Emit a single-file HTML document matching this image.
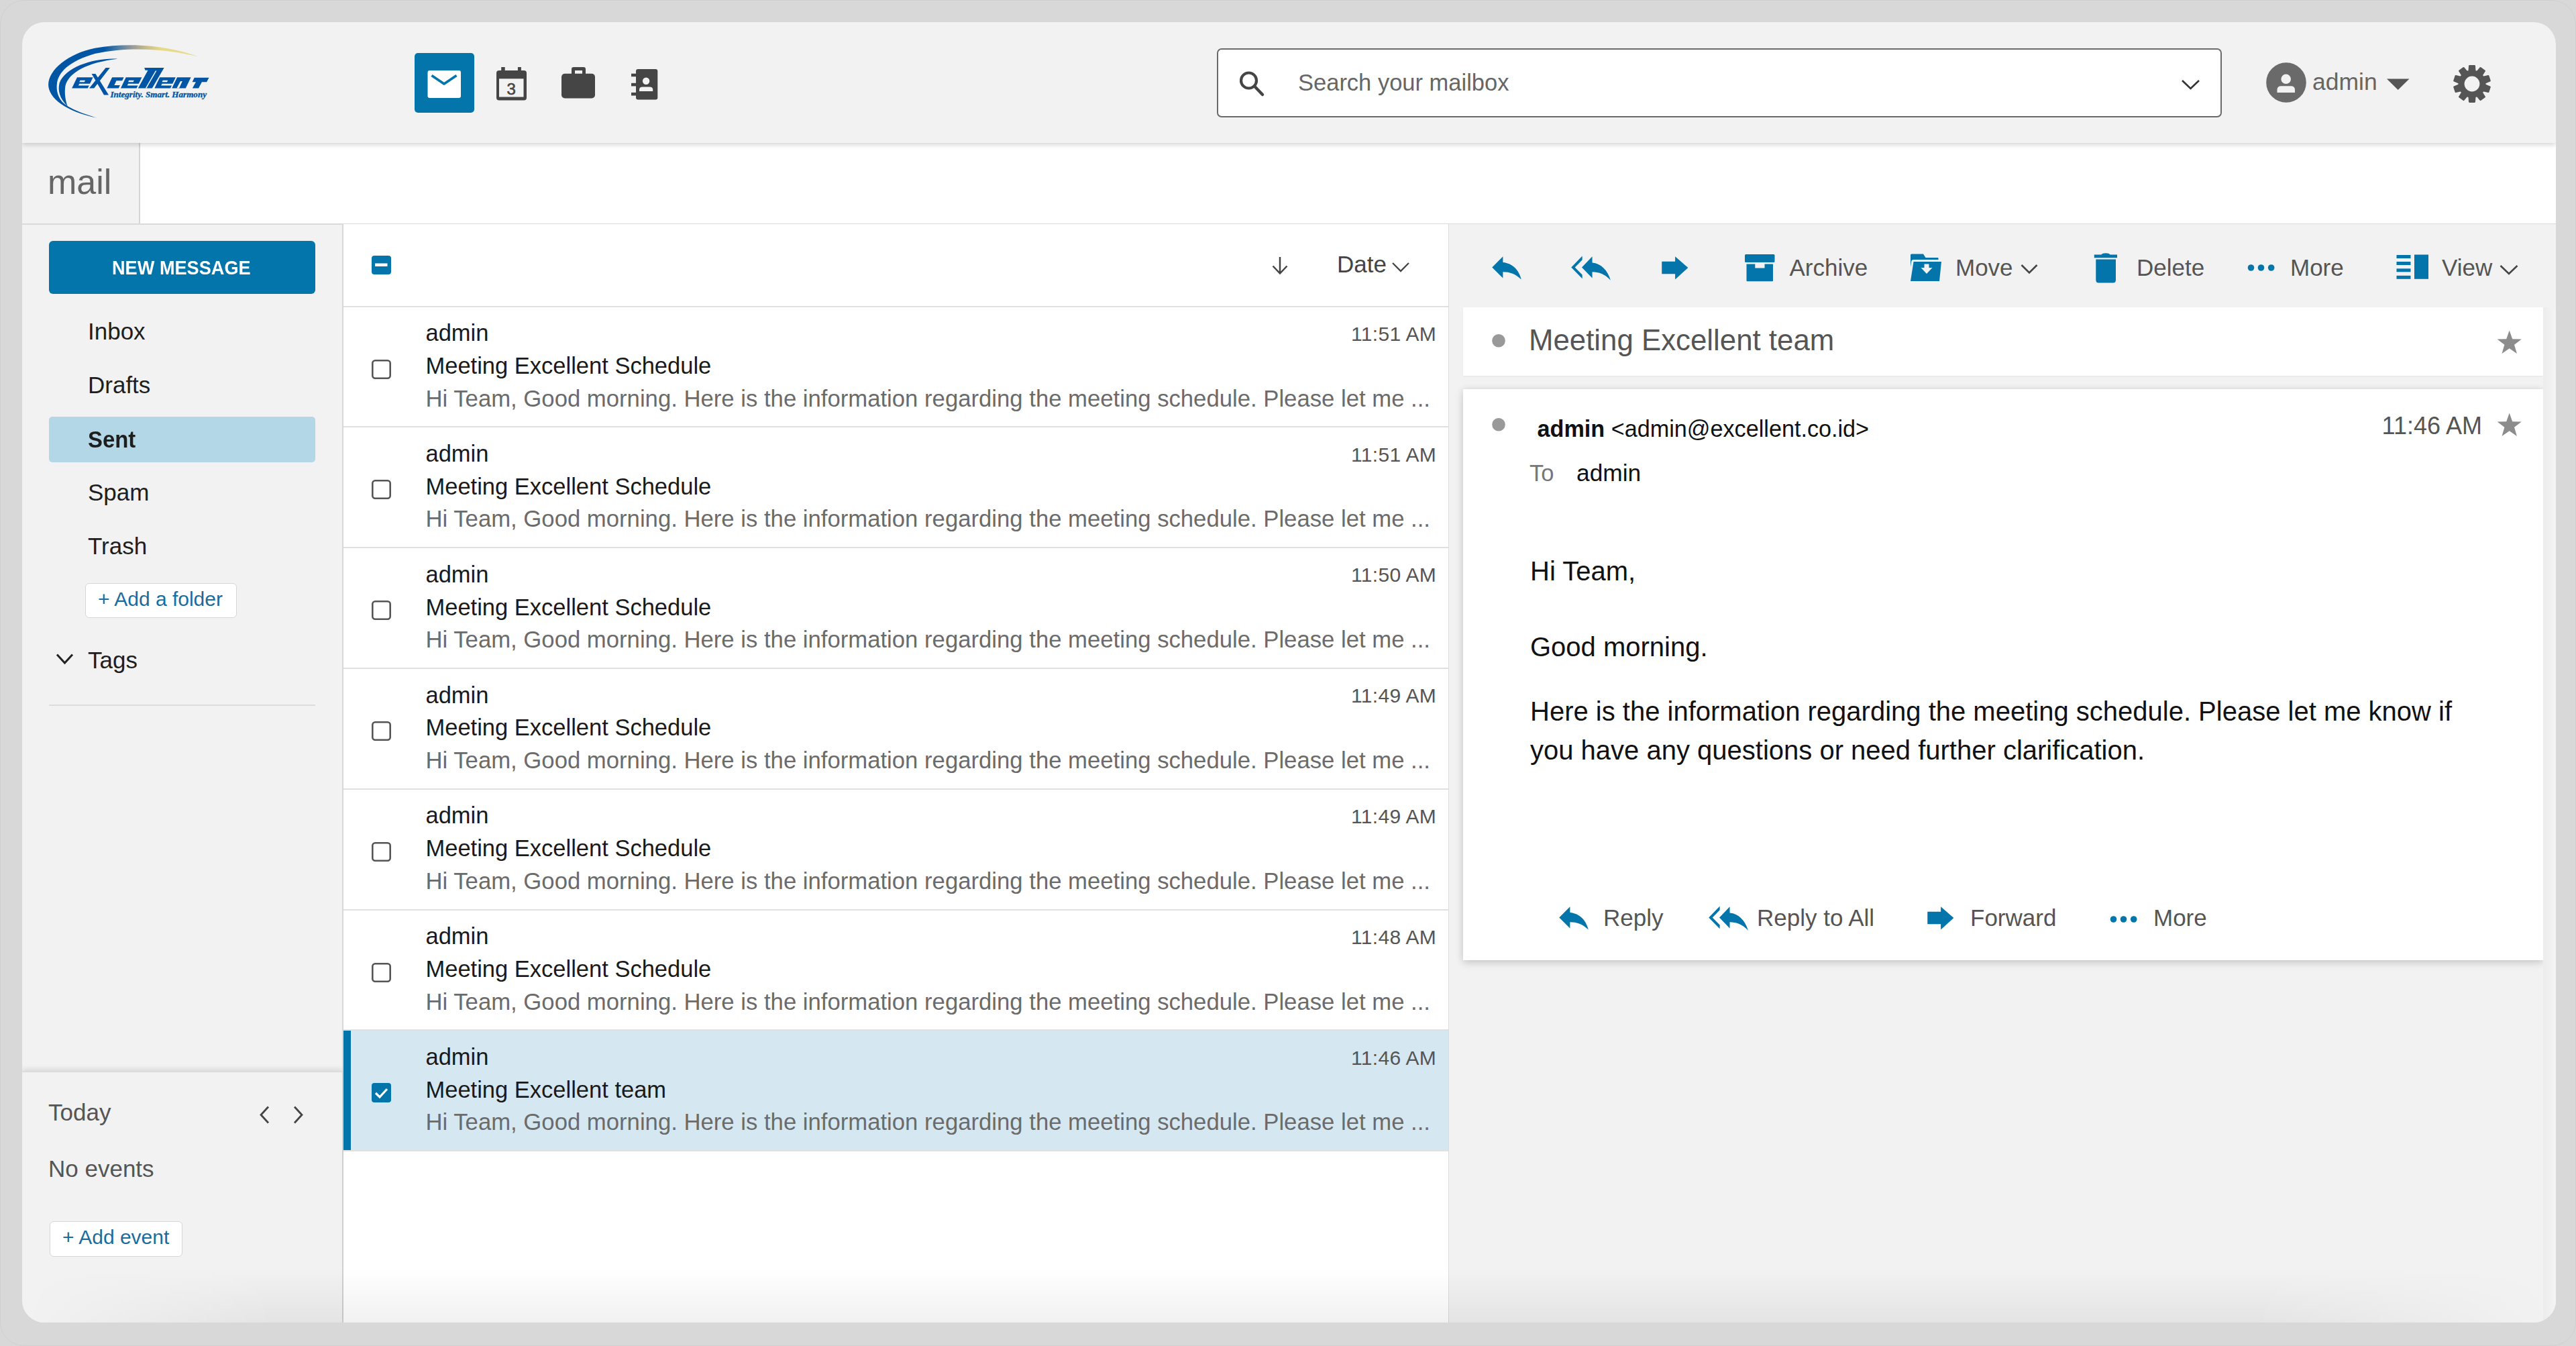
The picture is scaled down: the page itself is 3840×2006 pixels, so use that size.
<!DOCTYPE html>
<html><head><meta charset="utf-8"><style>
html,body{margin:0;padding:0;width:3840px;height:2006px;overflow:hidden;background:#d8d8d8;font-family:"Liberation Sans", sans-serif;}
</style></head><body>
<div style="position:absolute;left:0;top:0;width:3838px;height:2004px;border:1px solid rgba(0,0,0,.04);border-radius:36px"></div>
<div style="position:absolute;left:33px;top:33px;width:3777px;height:1938px;border-radius:33px;overflow:hidden;background:#f2f2f2"><div style="position:absolute;left:-33px;top:-33px;width:3840px;height:2006px">
<div style="position:absolute;left:33px;top:33px;width:3777px;height:180px;background:#f2f2f2;border-radius:33px 33px 0 0;box-shadow:0 3px 7px rgba(0,0,0,.16);z-index:2"></div>
<svg style="position:absolute;left:60px;top:55px;z-index:3" width="260" height="130" viewBox="60 55 260 130">
<defs><linearGradient id="lg" gradientUnits="userSpaceOnUse" x1="285" y1="0" x2="2270" y2="0">
<stop offset="0" stop-color="#0055a5"/><stop offset="0.37" stop-color="#0055a5"/><stop offset="0.47" stop-color="#4f7fa5"/><stop offset="0.56" stop-color="#999"/><stop offset="0.66" stop-color="#c9c089"/><stop offset="0.75" stop-color="#e6d98a"/><stop offset="1" stop-color="#e8dc8c"/></linearGradient></defs>
<g transform="translate(40,45) scale(0.11257)">
<path fill="url(#lg)" d="M2270,350 C1900,215 1400,150 900,238 C550,310 290,520 285,720 C285,900 520,1080 935,1162 C760,1110 560,1040 470,950 C410,880 390,800 398,720 C410,560 560,410 900,312 C1400,205 1900,262 2270,350 Z"/>
<path fill="#0055a5" d="M1205,380 C900,362 510,485 432,700 C408,800 432,900 540,1010 C510,930 496,830 510,740 C550,560 805,425 1205,380 Z"/>
</g>
<g transform="translate(100,98) scale(0.04464)"><path fill="#0055a5" d="M160,750 L690,750 L865,385 L335,385 Z M1290,70 L1430,70 L900,750 L740,750 Z M820,270 L950,270 L1389,972 L1232,972 Z M1330,750 L1720,750 L1895,385 L1505,385 Z M1790,750 L2320,750 L2495,385 L1965,385 Z M2580,70 L3240,70 L2840,750 L2370,750 L2700,150 L2610,150 Z M2920,750 L3450,750 L3625,385 L3095,385 Z M3500,750 L3960,750 L4135,385 L3675,385 Z M4250,400 L4740,400 L4660,545 L4180,545 Z M4300,545 L4500,545 L4390,750 L4185,750 Z"/><path fill="#f2f2f2" d="M410,545 L580,545 L606,490 L436,490 Z M380,660 L750,660 L780,600 L409,600 Z M1575,650 L1785,650 L1857,500 L1647,500 Z M2040,545 L2210,545 L2236,490 L2066,490 Z M2010,660 L2380,660 L2410,600 L2039,600 Z M2950,170 L2990,170 L2655,750 L2615,750 Z M3170,545 L3340,545 L3366,490 L3196,490 Z M3140,660 L3510,660 L3540,600 L3169,600 Z M3785,515 L3850,515 L3740,750 L3660,750 Z"/></g>
<text x="164.5" y="145" font-family="Liberation Serif" font-style="italic" font-weight="700" font-size="11.6" fill="#0055a5" stroke="#0055a5" stroke-width="0.3" textLength="143.5" lengthAdjust="spacingAndGlyphs">Integrity. Smart. Harmony</text>
</svg>
<div style="position:absolute;left:618px;top:79px;width:89px;height:89px;background:#0475ab;border-radius:5px;z-index:3"></div>
<svg style="position:absolute;left:637px;top:105px;z-index:3" width="50" height="41" viewBox="0 0 50 41"><rect x="0.5" y="0" width="49.5" height="41" rx="3" fill="#fff"/><path d="M6.5,7.5 L25,20 L43.5,7.5" fill="none" stroke="#0475ab" stroke-width="3.8" stroke-linejoin="round"/></svg>
<svg style="position:absolute;left:740px;top:100px;z-index:3" width="46" height="51" viewBox="0 0 46 51"><rect x="0" y="5" width="45" height="44.5" rx="4" fill="#454545"/><rect x="4" y="17.3" width="36.5" height="27.2" fill="#f2f2f2"/><rect x="7.2" y="0" width="5.5" height="7" fill="#454545"/><rect x="31.9" y="0" width="5" height="7" fill="#454545"/><text x="22.2" y="40.5" font-family="Liberation Sans" font-weight="400" font-size="24" text-anchor="middle" fill="#454545" stroke="#454545" stroke-width="0.6">3</text></svg>
<svg style="position:absolute;left:837px;top:100px;z-index:3" width="51" height="47" viewBox="0 0 51 47"><path d="M15,10 L15,3 Q15,0 18,0 L33,0 Q36,0 36,3 L36,10 L31,10 L31,5 L20,5 L20,10 Z" fill="#454545"/><rect x="0" y="9.7" width="50" height="36.8" rx="5" fill="#454545"/></svg>
<svg style="position:absolute;left:940px;top:102px;z-index:3" width="42" height="48" viewBox="0 0 42 48"><rect x="8" y="1" width="32.3" height="45.4" rx="3" fill="#454545"/><rect x="1" y="7.7" width="8" height="4.5" fill="#454545"/><rect x="1" y="21.8" width="8" height="4.6" fill="#454545"/><rect x="1" y="35.9" width="8" height="4.6" fill="#454545"/><circle cx="23.1" cy="18.8" r="5.2" fill="#f2f2f2"/><path d="M13,34 L13,31.5 Q13,27.4 18,27.4 L28.2,27.4 Q33.2,27.4 33.2,31.5 L33.2,34 Z" fill="#f2f2f2"/></svg>
<div style="position:absolute;left:1814px;top:72px;width:1498px;height:103px;background:#fff;border:2px solid #6a6a6a;border-radius:7px;box-sizing:border-box;z-index:3"></div>
<svg style="position:absolute;left:1845px;top:104px;z-index:3" width="42" height="42" viewBox="0 0 42 42"><circle cx="16.5" cy="16" r="11.5" fill="none" stroke="#454545" stroke-width="4.2"/><path d="M25,24.5 L37,37" stroke="#454545" stroke-width="4.5" stroke-linecap="round"/></svg>
<div style="position:absolute;left:1935px;top:104.41px;font-size:34.5px;line-height:39.67px;color:#666;font-weight:400;white-space:pre;z-index:3">Search your mailbox</div>
<svg style="position:absolute;left:3250px;top:116px;z-index:3" width="31" height="21" viewBox="0 0 31 21"><path d="M3,4 L15.5,16 L28,4" fill="none" stroke="#333" stroke-width="2.6"/></svg>
<svg style="position:absolute;left:3378px;top:93px;z-index:3" width="60" height="60" viewBox="0 0 60 60"><circle cx="30" cy="30" r="29.8" fill="#6a6a6a"/><circle cx="29.7" cy="24.8" r="7.3" fill="#f2f2f2"/><path d="M16.5,45.1 L16.5,41 Q16.5,35.3 22.5,35.3 L37,35.3 Q43,35.3 43,41 L43,45.1 Z" fill="#f2f2f2"/></svg>
<div style="position:absolute;left:3447px;top:101.89px;font-size:35.5px;line-height:40.82px;color:#666;font-weight:400;white-space:pre;z-index:3">admin</div>
<svg style="position:absolute;left:3556px;top:116px;z-index:3" width="38" height="20" viewBox="0 0 38 20"><path d="M2,1.4 L35.5,1.4 L18.7,18 Z" fill="#555"/></svg>
<svg style="position:absolute;left:3655.1px;top:95.4px;z-index:3" width="60" height="60" viewBox="0 0 60 60"><path d="M25.64,10.99 L26.21,3.27 L33.79,3.27 L34.36,10.99 L37.64,12.06 L42.65,6.15 L48.78,10.60 L44.70,17.19 L46.73,19.98 L54.25,18.14 L56.60,25.34 L49.42,28.28 L49.42,31.72 L56.60,34.66 L54.25,41.86 L46.73,40.02 L44.70,42.81 L48.78,49.40 L42.65,53.85 L37.64,47.94 L34.36,49.01 L33.79,56.73 L26.21,56.73 L25.64,49.01 L22.36,47.94 L17.35,53.85 L11.22,49.40 L15.30,42.81 L13.27,40.02 L5.75,41.86 L3.40,34.66 L10.58,31.72 L10.58,28.28 L3.40,25.34 L5.75,18.14 L13.27,19.98 L15.30,17.19 L11.22,10.60 L17.35,6.15 L22.36,12.06 Z" fill="#555" stroke="#555" stroke-width="2.4" stroke-linejoin="round"/><circle cx="30" cy="30" r="11.4" fill="#f2f2f2"/></svg>
<div style="position:absolute;left:209px;top:213px;width:3601px;height:121px;background:#fff"></div>
<div style="position:absolute;left:207px;top:213px;width:2px;height:121px;background:#d5d5d5"></div>
<div style="position:absolute;left:33px;top:333px;width:3777px;height:2px;background:#dadada"></div>
<div style="position:absolute;left:71px;top:241.78px;font-size:52px;line-height:59.8px;color:#666;font-weight:400;white-space:pre;">mail</div>
<div style="position:absolute;left:509.5px;top:334px;width:2.0px;height:1637px;background:#d8d8d8"></div>
<div style="position:absolute;left:73px;top:359px;width:397px;height:79px;background:#0475ab;border-radius:6px"></div>
<div style="position:absolute;left:166.5px;top:382.06px;font-size:30px;line-height:34.5px;color:#fff;font-weight:700;white-space:pre;transform:scaleX(0.905);transform-origin:0 0">NEW MESSAGE</div>
<div style="position:absolute;left:131px;top:474.45px;font-size:35px;line-height:40.25px;color:#1e1e1e;font-weight:400;white-space:pre;">Inbox</div>
<div style="position:absolute;left:131px;top:554.15px;font-size:35px;line-height:40.25px;color:#1e1e1e;font-weight:400;white-space:pre;">Drafts</div>
<div style="position:absolute;left:131px;top:714.35px;font-size:35px;line-height:40.25px;color:#1e1e1e;font-weight:400;white-space:pre;">Spam</div>
<div style="position:absolute;left:131px;top:794.25px;font-size:35px;line-height:40.25px;color:#1e1e1e;font-weight:400;white-space:pre;">Trash</div>
<div style="position:absolute;left:73px;top:620.6px;width:397px;height:68.60000000000002px;background:#b3d7e6;border-radius:5px"></div>
<div style="position:absolute;left:131px;top:635.25px;font-size:35px;line-height:40.25px;color:#1e1e1e;font-weight:700;white-space:pre;transform:scaleX(0.94);transform-origin:0 0">Sent</div>
<div style="position:absolute;left:127px;top:868.5px;width:226px;height:52.5px;background:#fff;border:1.5px solid #d6d6d6;border-radius:6px;box-sizing:border-box"></div>
<div style="position:absolute;left:146px;top:875.65px;font-size:30px;line-height:34.5px;color:#1a6c9c;font-weight:400;white-space:pre;">+ Add a folder</div>
<svg style="position:absolute;left:82px;top:972px;" width="30" height="21" viewBox="0 0 30 21"><path d="M3,3.5 L14.5,16 L26,3.5" fill="none" stroke="#222" stroke-width="3"/></svg>
<div style="position:absolute;left:131px;top:963.65px;font-size:35px;line-height:40.25px;color:#1e1e1e;font-weight:400;white-space:pre;">Tags</div>
<div style="position:absolute;left:73px;top:1050px;width:397px;height:2px;background:#dcdcdc"></div>
<div style="position:absolute;left:33px;top:1597px;width:476.5px;height:374px;background:#f2f2f2;box-shadow:0 -4px 7px rgba(0,0,0,.10);border-top:1px solid #d9d9d9"></div>
<div style="position:absolute;left:72px;top:1637.95px;font-size:35px;line-height:40.25px;color:#555;font-weight:400;white-space:pre;">Today</div>
<svg style="position:absolute;left:384px;top:1646px;" width="22" height="30" viewBox="0 0 22 30"><path d="M16,3.5 L5,15.5 L16,27.5" fill="none" stroke="#444" stroke-width="2.8"/></svg>
<svg style="position:absolute;left:434px;top:1646px;" width="22" height="30" viewBox="0 0 22 30"><path d="M5,3.5 L16,15.5 L5,27.5" fill="none" stroke="#444" stroke-width="2.8"/></svg>
<div style="position:absolute;left:72px;top:1722.45px;font-size:35px;line-height:40.25px;color:#555;font-weight:400;white-space:pre;">No events</div>
<div style="position:absolute;left:74px;top:1819.5px;width:198px;height:53.5px;background:#fff;border:1.5px solid #d6d6d6;border-radius:6px;box-sizing:border-box"></div>
<div style="position:absolute;left:93px;top:1826.56px;font-size:30px;line-height:34.5px;color:#1a6c9c;font-weight:400;white-space:pre;">+ Add event</div>
<div style="position:absolute;left:511.5px;top:334px;width:1647.0px;height:1637px;background:#fff"></div>
<div style="position:absolute;left:2158.5px;top:334px;width:2.0px;height:1637px;background:#dcdcdc"></div>
<div style="position:absolute;left:511.5px;top:455.5px;width:1647.0px;height:2.0px;background:#e0e0e0"></div>
<svg style="position:absolute;left:554px;top:381px;" width="29" height="28" viewBox="0 0 29 28"><rect x="0" y="0" width="29" height="28" rx="4" fill="#0475ab"/><rect x="5" y="11.5" width="18.5" height="4.5" fill="#fff"/></svg>
<svg style="position:absolute;left:1893px;top:381px;" width="30" height="30" viewBox="0 0 30 30"><path d="M15,2 L15,26 M4.5,15.5 L15,26.5 L25.5,15.5" fill="none" stroke="#444" stroke-width="2.5"/></svg>
<div style="position:absolute;left:1993px;top:374.35px;font-size:35px;line-height:40.25px;color:#444;font-weight:400;white-space:pre;">Date</div>
<svg style="position:absolute;left:2073px;top:389px;" width="30" height="19" viewBox="0 0 30 19"><path d="M3,3 L15,15 L27,3" fill="none" stroke="#444" stroke-width="2.3"/></svg>
<div style="position:absolute;left:511.5px;top:635.3px;width:1647.0px;height:2.0px;background:#e0e0e0"></div>
<div style="position:absolute;left:634.5px;top:477.21px;font-size:34.5px;line-height:39.67px;color:#1a1a1a;font-weight:400;white-space:pre;">admin</div>
<div style="position:absolute;left:634.5px;top:525.91px;font-size:34.5px;line-height:39.67px;color:#1a1a1a;font-weight:400;white-space:pre;">Meeting Excellent Schedule</div>
<div style="position:absolute;left:634.5px;top:574.52px;font-size:34.7px;line-height:39.91px;color:#6b6b6b;font-weight:400;white-space:pre;">Hi Team, Good morning. Here is the information regarding the meeting schedule. Please let me ...</div>
<div style="position:absolute;left:1900px;width:2139px;top:0"></div>
<div style="position:absolute;right:1699px;top:480.86px;font-size:30px;line-height:34.5px;color:#555;white-space:pre;letter-spacing:0.3px">11:51 AM</div>
<svg style="position:absolute;left:554px;top:535.5px;" width="29" height="29" viewBox="0 0 29 29"><rect x="1.3" y="1.3" width="26.4" height="26.4" rx="4" fill="#fff" stroke="#555" stroke-width="2.6"/></svg>
<div style="position:absolute;left:511.5px;top:815.0999999999999px;width:1647.0px;height:2.0px;background:#e0e0e0"></div>
<div style="position:absolute;left:634.5px;top:657.01px;font-size:34.5px;line-height:39.67px;color:#1a1a1a;font-weight:400;white-space:pre;">admin</div>
<div style="position:absolute;left:634.5px;top:705.71px;font-size:34.5px;line-height:39.67px;color:#1a1a1a;font-weight:400;white-space:pre;">Meeting Excellent Schedule</div>
<div style="position:absolute;left:634.5px;top:754.32px;font-size:34.7px;line-height:39.91px;color:#6b6b6b;font-weight:400;white-space:pre;">Hi Team, Good morning. Here is the information regarding the meeting schedule. Please let me ...</div>
<div style="position:absolute;left:1900px;width:2139px;top:0"></div>
<div style="position:absolute;right:1699px;top:660.65px;font-size:30px;line-height:34.5px;color:#555;white-space:pre;letter-spacing:0.3px">11:51 AM</div>
<svg style="position:absolute;left:554px;top:715.3px;" width="29" height="29" viewBox="0 0 29 29"><rect x="1.3" y="1.3" width="26.4" height="26.4" rx="4" fill="#fff" stroke="#555" stroke-width="2.6"/></svg>
<div style="position:absolute;left:511.5px;top:994.9000000000001px;width:1647.0px;height:2.0px;background:#e0e0e0"></div>
<div style="position:absolute;left:634.5px;top:836.81px;font-size:34.5px;line-height:39.67px;color:#1a1a1a;font-weight:400;white-space:pre;">admin</div>
<div style="position:absolute;left:634.5px;top:885.51px;font-size:34.5px;line-height:39.67px;color:#1a1a1a;font-weight:400;white-space:pre;">Meeting Excellent Schedule</div>
<div style="position:absolute;left:634.5px;top:934.12px;font-size:34.7px;line-height:39.91px;color:#6b6b6b;font-weight:400;white-space:pre;">Hi Team, Good morning. Here is the information regarding the meeting schedule. Please let me ...</div>
<div style="position:absolute;left:1900px;width:2139px;top:0"></div>
<div style="position:absolute;right:1699px;top:840.46px;font-size:30px;line-height:34.5px;color:#555;white-space:pre;letter-spacing:0.3px">11:50 AM</div>
<svg style="position:absolute;left:554px;top:895.1px;" width="29" height="29" viewBox="0 0 29 29"><rect x="1.3" y="1.3" width="26.4" height="26.4" rx="4" fill="#fff" stroke="#555" stroke-width="2.6"/></svg>
<div style="position:absolute;left:511.5px;top:1174.7px;width:1647.0px;height:2.0px;background:#e0e0e0"></div>
<div style="position:absolute;left:634.5px;top:1016.61px;font-size:34.5px;line-height:39.67px;color:#1a1a1a;font-weight:400;white-space:pre;">admin</div>
<div style="position:absolute;left:634.5px;top:1065.31px;font-size:34.5px;line-height:39.67px;color:#1a1a1a;font-weight:400;white-space:pre;">Meeting Excellent Schedule</div>
<div style="position:absolute;left:634.5px;top:1113.92px;font-size:34.7px;line-height:39.91px;color:#6b6b6b;font-weight:400;white-space:pre;">Hi Team, Good morning. Here is the information regarding the meeting schedule. Please let me ...</div>
<div style="position:absolute;left:1900px;width:2139px;top:0"></div>
<div style="position:absolute;right:1699px;top:1020.26px;font-size:30px;line-height:34.5px;color:#555;white-space:pre;letter-spacing:0.3px">11:49 AM</div>
<svg style="position:absolute;left:554px;top:1074.9px;" width="29" height="29" viewBox="0 0 29 29"><rect x="1.3" y="1.3" width="26.4" height="26.4" rx="4" fill="#fff" stroke="#555" stroke-width="2.6"/></svg>
<div style="position:absolute;left:511.5px;top:1354.5px;width:1647.0px;height:2.0px;background:#e0e0e0"></div>
<div style="position:absolute;left:634.5px;top:1196.41px;font-size:34.5px;line-height:39.67px;color:#1a1a1a;font-weight:400;white-space:pre;">admin</div>
<div style="position:absolute;left:634.5px;top:1245.11px;font-size:34.5px;line-height:39.67px;color:#1a1a1a;font-weight:400;white-space:pre;">Meeting Excellent Schedule</div>
<div style="position:absolute;left:634.5px;top:1293.72px;font-size:34.7px;line-height:39.91px;color:#6b6b6b;font-weight:400;white-space:pre;">Hi Team, Good morning. Here is the information regarding the meeting schedule. Please let me ...</div>
<div style="position:absolute;left:1900px;width:2139px;top:0"></div>
<div style="position:absolute;right:1699px;top:1200.06px;font-size:30px;line-height:34.5px;color:#555;white-space:pre;letter-spacing:0.3px">11:49 AM</div>
<svg style="position:absolute;left:554px;top:1254.7px;" width="29" height="29" viewBox="0 0 29 29"><rect x="1.3" y="1.3" width="26.4" height="26.4" rx="4" fill="#fff" stroke="#555" stroke-width="2.6"/></svg>
<div style="position:absolute;left:511.5px;top:1534.3px;width:1647.0px;height:2.0px;background:#e0e0e0"></div>
<div style="position:absolute;left:634.5px;top:1376.21px;font-size:34.5px;line-height:39.67px;color:#1a1a1a;font-weight:400;white-space:pre;">admin</div>
<div style="position:absolute;left:634.5px;top:1424.91px;font-size:34.5px;line-height:39.67px;color:#1a1a1a;font-weight:400;white-space:pre;">Meeting Excellent Schedule</div>
<div style="position:absolute;left:634.5px;top:1473.52px;font-size:34.7px;line-height:39.91px;color:#6b6b6b;font-weight:400;white-space:pre;">Hi Team, Good morning. Here is the information regarding the meeting schedule. Please let me ...</div>
<div style="position:absolute;left:1900px;width:2139px;top:0"></div>
<div style="position:absolute;right:1699px;top:1379.86px;font-size:30px;line-height:34.5px;color:#555;white-space:pre;letter-spacing:0.3px">11:48 AM</div>
<svg style="position:absolute;left:554px;top:1434.5px;" width="29" height="29" viewBox="0 0 29 29"><rect x="1.3" y="1.3" width="26.4" height="26.4" rx="4" fill="#fff" stroke="#555" stroke-width="2.6"/></svg>
<div style="position:absolute;left:511.5px;top:1536.3000000000002px;width:1647.0px;height:177.79999999999995px;background:#d5e8f2"></div>
<div style="position:absolute;left:512px;top:1536.3000000000002px;width:10.5px;height:177.79999999999995px;background:#0475ab"></div>
<div style="position:absolute;left:511.5px;top:1714.1000000000001px;width:1647.0px;height:2.0px;background:#e0e0e0"></div>
<div style="position:absolute;left:634.5px;top:1556.01px;font-size:34.5px;line-height:39.67px;color:#1a1a1a;font-weight:400;white-space:pre;">admin</div>
<div style="position:absolute;left:634.5px;top:1604.71px;font-size:34.5px;line-height:39.67px;color:#1a1a1a;font-weight:400;white-space:pre;">Meeting Excellent team</div>
<div style="position:absolute;left:634.5px;top:1653.32px;font-size:34.7px;line-height:39.91px;color:#6b6b6b;font-weight:400;white-space:pre;">Hi Team, Good morning. Here is the information regarding the meeting schedule. Please let me ...</div>
<div style="position:absolute;left:1900px;width:2139px;top:0"></div>
<div style="position:absolute;right:1699px;top:1559.66px;font-size:30px;line-height:34.5px;color:#555;white-space:pre;letter-spacing:0.3px">11:46 AM</div>
<svg style="position:absolute;left:554px;top:1614.3000000000002px;" width="29" height="29" viewBox="0 0 29 29"><rect x="0" y="0" width="29" height="29" rx="4" fill="#0475ab"/><path d="M6,15 L12,21 L23,9" fill="none" stroke="#fff" stroke-width="3.2"/></svg>
<div style="position:absolute;left:2160px;top:334px;width:1650px;height:1637px;background:#f2f2f2"></div>
<svg style="position:absolute;left:2223px;top:380.5px;" width="48" height="38" viewBox="0 0 48 38"><g transform="scale(0.12422360248447203) translate(-105,-125)"><path d="M115,265 L245,135 L245,205 C360,215 440,300 465,410 C395,345 330,320 245,320 L245,395 Z" fill="#0475ab"/></g></svg>
<svg style="position:absolute;left:2341px;top:380.5px;" width="62" height="40" viewBox="0 0 62 40"><g transform="scale(0.12422360248447203) translate(-1058,-125)"><path d="M1200,130 L1068,265 L1200,400 L1200,355 L1112,265 L1200,175 Z" fill="#0475ab"/><path d="M1195,265 L1320,135 L1320,210 C1425,220 1505,300 1540,420 C1470,345 1400,320 1320,320 L1320,395 Z" fill="#0475ab"/></g></svg>
<svg style="position:absolute;left:2475.7px;top:380.5px;" width="44" height="38" viewBox="0 0 44 38"><g transform="scale(0.12422360248447203) translate(-2145,-125)"><path d="M2155,195 L2315,195 L2315,135 L2470,270 L2315,410 L2315,345 L2155,345 Z" fill="#0475ab"/></g></svg>
<svg style="position:absolute;left:2601px;top:379px;" width="46" height="41" viewBox="0 0 46 41"><rect x="0" y="0" width="44.5" height="12" rx="1.5" fill="#0475ab"/><path d="M2.5,14.5 L15.3,14.5 L15.3,20.4 L29.5,20.4 L29.5,14.5 L42,14.5 L42,39.5 Q42,40.3 41,40.3 L3.5,40.3 Q2.5,40.3 2.5,39.5 Z" fill="#0475ab"/></svg>
<div style="position:absolute;left:2667.5px;top:378.95px;font-size:35px;line-height:40.25px;color:#555;font-weight:400;white-space:pre;">Archive</div>
<svg style="position:absolute;left:2846px;top:378px;" width="51" height="43" viewBox="0 0 51 43"><path d="M2,2 Q2,0.5 3.5,0.5 L21,0.5 L24.5,6 L42.5,6 Q43.5,6 43.5,7 L43.5,9 L6,9 Q3.5,9 3.2,11.5 L2,20 Z" fill="#0475ab"/><path d="M6.5,12 L48,12 L45,41 L2,41 Z" fill="#0475ab"/><path d="M22.5,15.5 L29.5,15.5 L29.5,21 L34.5,21 L26,30 L17.5,21 L22.5,21 Z" fill="#f2f2f2"/></svg>
<div style="position:absolute;left:2915px;top:379.05px;font-size:35px;line-height:40.25px;color:#555;font-weight:400;white-space:pre;">Move</div>
<svg style="position:absolute;left:3011px;top:392px;" width="28" height="19" viewBox="0 0 28 19"><path d="M2.5,3 L14,14.5 L25.5,3" fill="none" stroke="#444" stroke-width="2.6"/></svg>
<svg style="position:absolute;left:3121px;top:377px;" width="37" height="46" viewBox="0 0 37 46"><path d="M0.8,2.5 L11.5,2.5 Q13,0.3 18,0.3 Q23,0.3 24.5,2.5 L35,2.5 L35,7.3 L0.8,7.3 Z" fill="#0475ab"/><path d="M3.3,9.4 L33,9.4 L33,40 Q33,44.5 29,44.5 L7.3,44.5 Q3.3,44.5 3.3,40 Z" fill="#0475ab"/></svg>
<div style="position:absolute;left:3185px;top:379.05px;font-size:35px;line-height:40.25px;color:#555;font-weight:400;white-space:pre;">Delete</div>
<svg style="position:absolute;left:3350px;top:393px;" width="42" height="12" viewBox="0 0 42 12"><circle cx="5.5" cy="6" r="4.8" fill="#0475ab"/><circle cx="20.5" cy="6" r="4.8" fill="#0475ab"/><circle cx="35.7" cy="6" r="4.8" fill="#0475ab"/></svg>
<div style="position:absolute;left:3414px;top:379.05px;font-size:35px;line-height:40.25px;color:#555;font-weight:400;white-space:pre;">More</div>
<svg style="position:absolute;left:3572px;top:379px;" width="49" height="38" viewBox="0 0 49 38"><rect x="0.5" y="1" width="21" height="5" fill="#0475ab"/><rect x="0.5" y="11" width="21" height="5" fill="#0475ab"/><rect x="0.5" y="21.3" width="21" height="5" fill="#0475ab"/><rect x="0.5" y="31.8" width="21" height="5" fill="#0475ab"/><rect x="27" y="0.5" width="21" height="36.3" fill="#0475ab"/></svg>
<div style="position:absolute;left:3640px;top:379.25px;font-size:35px;line-height:40.25px;color:#555;font-weight:400;white-space:pre;">View</div>
<svg style="position:absolute;left:3725px;top:393px;" width="30" height="19" viewBox="0 0 30 19"><path d="M2.5,3 L15,15 L27.5,3" fill="none" stroke="#444" stroke-width="2.6"/></svg>
<div style="position:absolute;left:2181px;top:458px;width:1610px;height:102px;background:#fff;box-shadow:0 1px 2px rgba(0,0,0,.06)"></div>
<svg style="position:absolute;left:2223px;top:497px;" width="22" height="22" viewBox="0 0 22 22"><circle cx="11" cy="10.8" r="9.8" fill="#999"/></svg>
<div style="position:absolute;left:2279px;top:482.14px;font-size:43.8px;line-height:50.37px;color:#555;font-weight:400;white-space:pre;">Meeting Excellent team</div>
<svg style="position:absolute;left:3722px;top:492px;" width="38" height="36" viewBox="0 0 38 36"><path d="M18.7,0.5 L23.2,13.2 L36.8,13.6 L26,21.8 L29.9,34.9 L18.7,27.2 L7.5,34.9 L11.4,21.8 L0.6,13.6 L14.2,13.2 Z" fill="#8c8c8c"/></svg>
<div style="position:absolute;left:2181px;top:580px;width:1610px;height:851px;background:#fff;box-shadow:0 4px 12px rgba(0,0,0,.15),0 0 10px rgba(0,0,0,.07)"></div>
<svg style="position:absolute;left:2223px;top:622px;" width="22" height="22" viewBox="0 0 22 22"><circle cx="11" cy="10.8" r="9.8" fill="#999"/></svg>
<div style="position:absolute;left:2291.5px;top:620.48px;font-size:34.2px;line-height:39.33px;color:#111;font-weight:400;white-space:pre;"><b>admin</b> &lt;admin@excellent.co.id&gt;</div>
<div style="position:absolute;right:140px;top:613.73px;font-size:36px;line-height:41.4px;color:#555;white-space:pre">11:46 AM</div>
<svg style="position:absolute;left:3722px;top:614.5px;" width="38" height="36" viewBox="0 0 38 36"><path d="M18.7,0.5 L23.2,13.2 L36.8,13.6 L26,21.8 L29.9,34.9 L18.7,27.2 L7.5,34.9 L11.4,21.8 L0.6,13.6 L14.2,13.2 Z" fill="#8c8c8c"/></svg>
<div style="position:absolute;left:2280px;top:686.21px;font-size:34.5px;line-height:39.67px;color:#777;font-weight:400;white-space:pre;">To</div>
<div style="position:absolute;left:2350px;top:685.47px;font-size:35.3px;line-height:40.59px;color:#111;font-weight:400;white-space:pre;">admin</div>
<div style="position:absolute;left:2281px;top:827.74px;font-size:40px;line-height:46.0px;color:#111;font-weight:400;white-space:pre;">Hi Team,</div>
<div style="position:absolute;left:2281px;top:940.74px;font-size:40px;line-height:46.0px;color:#111;font-weight:400;white-space:pre;">Good morning.</div>
<div style="position:absolute;left:2281px;top:1037.04px;font-size:40px;line-height:46.0px;color:#111;font-weight:400;white-space:pre;">Here is the information regarding the meeting schedule. Please let me know if</div>
<div style="position:absolute;left:2281px;top:1094.84px;font-size:40px;line-height:46.0px;color:#111;font-weight:400;white-space:pre;">you have any questions or need further clarification.</div>
<svg style="position:absolute;left:2323px;top:1349.8px;" width="48" height="38" viewBox="0 0 48 38"><g transform="scale(0.12422360248447203) translate(-105,-125)"><path d="M115,265 L245,135 L245,205 C360,215 440,300 465,410 C395,345 330,320 245,320 L245,395 Z" fill="#0475ab"/></g></svg>
<div style="position:absolute;left:2390px;top:1347.95px;font-size:35px;line-height:40.25px;color:#555;font-weight:400;white-space:pre;">Reply</div>
<svg style="position:absolute;left:2545.5px;top:1349.8px;" width="62" height="40" viewBox="0 0 62 40"><g transform="scale(0.12422360248447203) translate(-1058,-125)"><path d="M1200,130 L1068,265 L1200,400 L1200,355 L1112,265 L1200,175 Z" fill="#0475ab"/><path d="M1195,265 L1320,135 L1320,210 C1425,220 1505,300 1540,420 C1470,345 1400,320 1320,320 L1320,395 Z" fill="#0475ab"/></g></svg>
<div style="position:absolute;left:2619px;top:1347.95px;font-size:35px;line-height:40.25px;color:#555;font-weight:400;white-space:pre;">Reply to All</div>
<svg style="position:absolute;left:2871.5px;top:1349.8px;" width="44" height="38" viewBox="0 0 44 38"><g transform="scale(0.12422360248447203) translate(-2145,-125)"><path d="M2155,195 L2315,195 L2315,135 L2470,270 L2315,410 L2315,345 L2155,345 Z" fill="#0475ab"/></g></svg>
<div style="position:absolute;left:2937px;top:1347.95px;font-size:35px;line-height:40.25px;color:#555;font-weight:400;white-space:pre;">Forward</div>
<svg style="position:absolute;left:3145px;top:1363.5px;" width="42" height="12" viewBox="0 0 42 12"><circle cx="5.5" cy="6" r="4.8" fill="#0475ab"/><circle cx="20.5" cy="6" r="4.8" fill="#0475ab"/><circle cx="35.7" cy="6" r="4.8" fill="#0475ab"/></svg>
<div style="position:absolute;left:3210px;top:1347.95px;font-size:35px;line-height:40.25px;color:#555;font-weight:400;white-space:pre;">More</div>
<div style="position:absolute;left:3791px;top:458px;width:19px;height:1513px;background:linear-gradient(90deg,#ececec,#f4f4f4)"></div>
<div style="position:absolute;left:33px;top:1890px;width:3777px;height:81px;background:linear-gradient(rgba(0,0,0,0),rgba(0,0,0,.055));-webkit-mask-image:linear-gradient(90deg,transparent 0%,#000 10%,#000 88%,transparent 100%);z-index:5"></div>
</div></div>
</body></html>
